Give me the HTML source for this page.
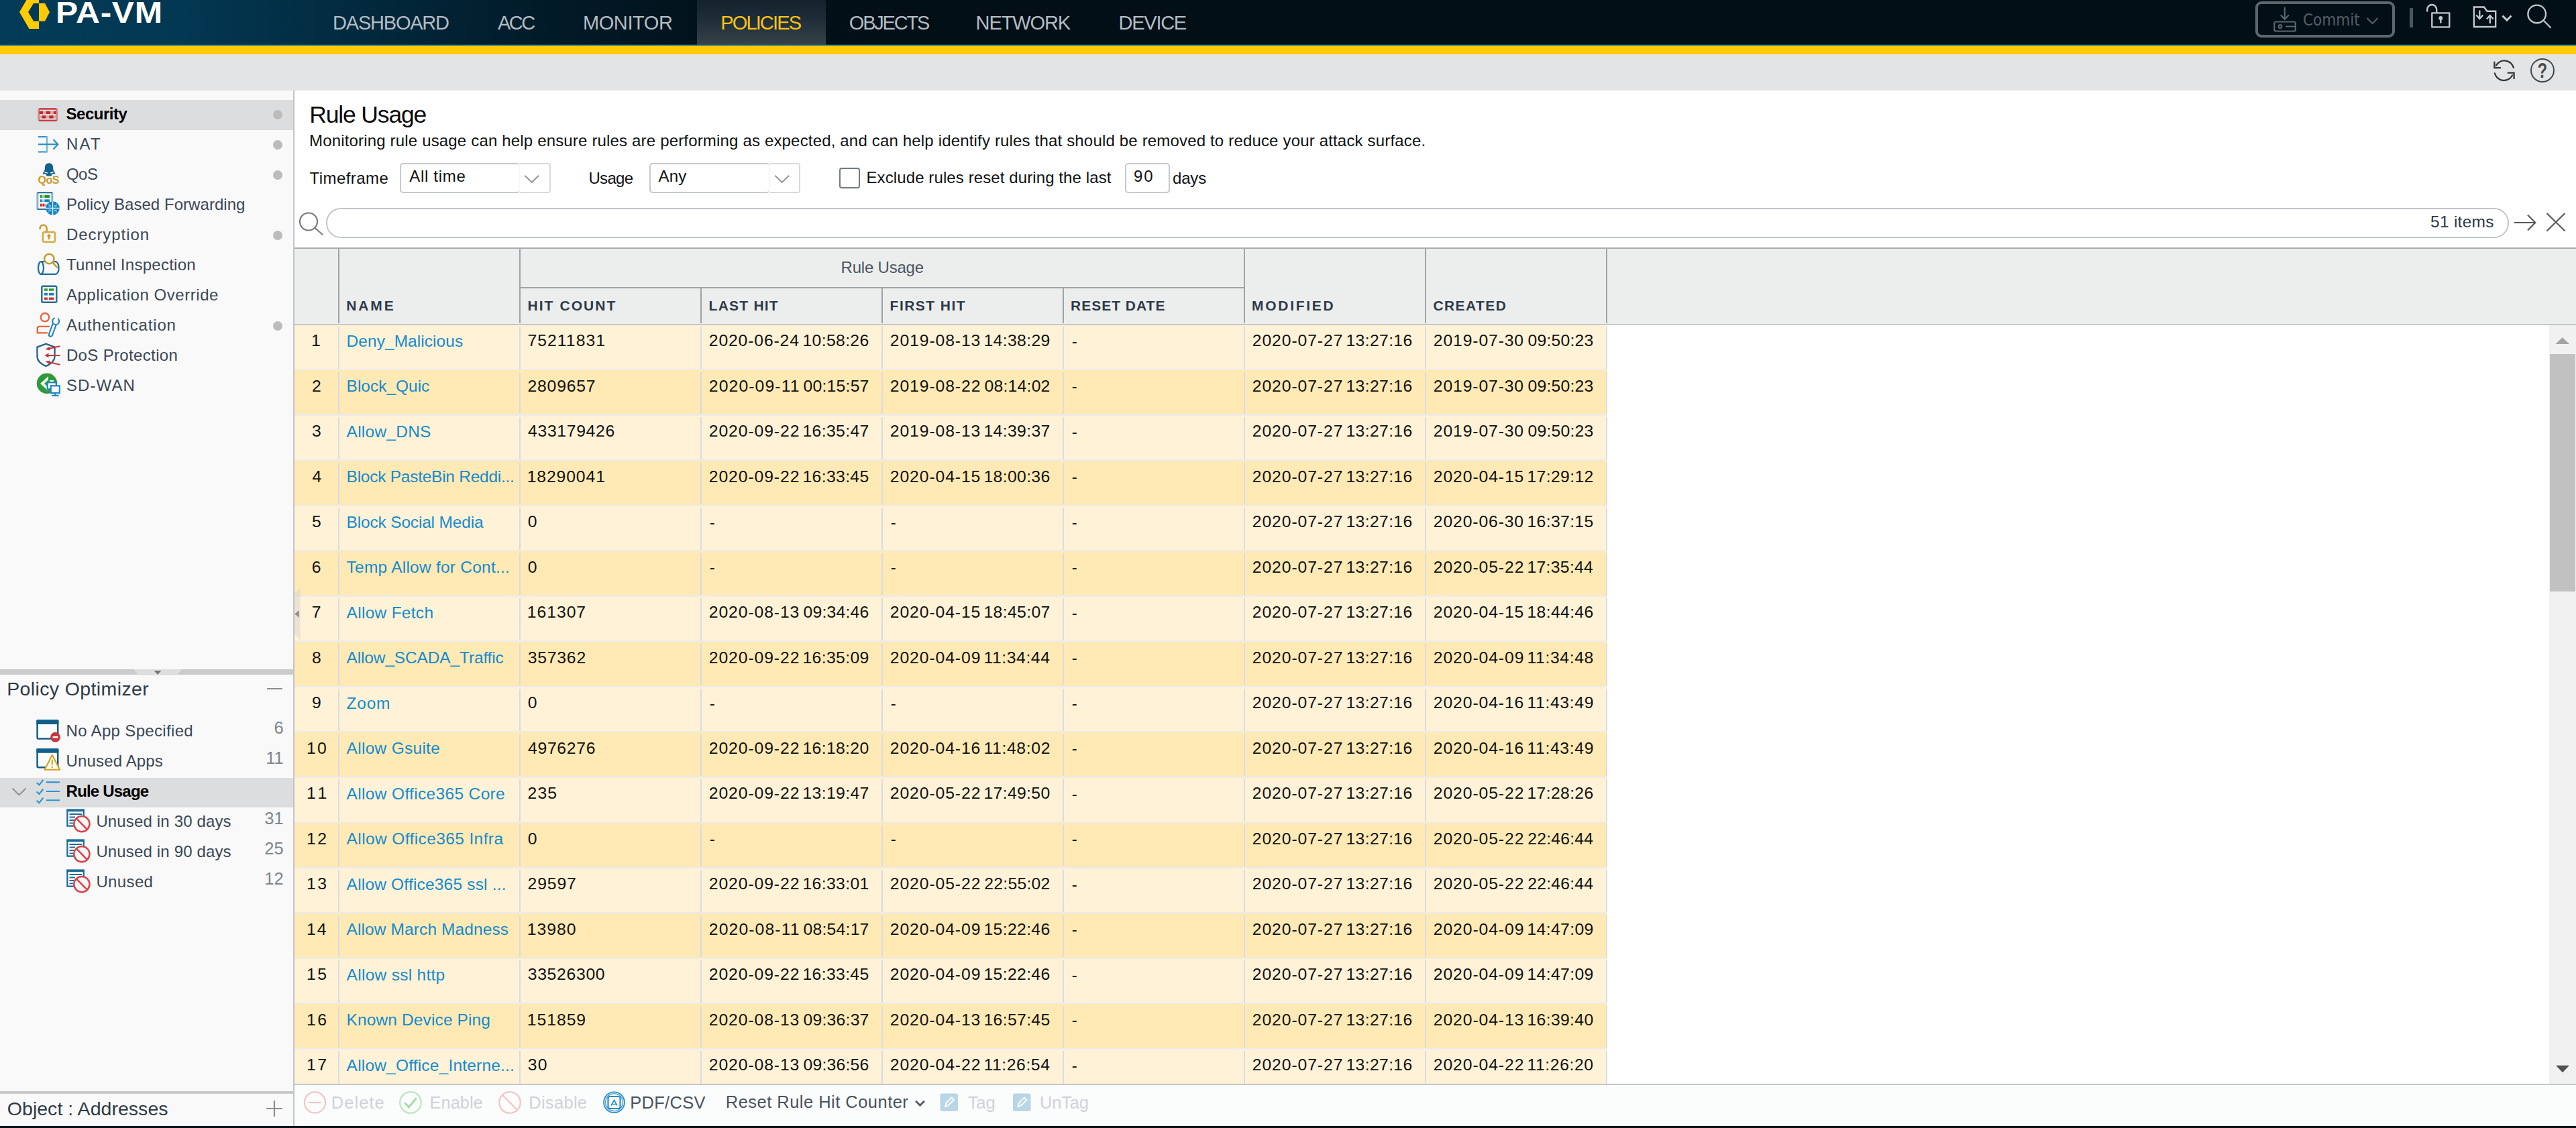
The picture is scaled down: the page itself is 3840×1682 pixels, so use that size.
<!DOCTYPE html>
<html lang="en"><head><meta charset="utf-8"><title>PA-VM</title>
<style>
html,body{margin:0;padding:0;}
body{width:3840px;height:1682px;position:relative;overflow:hidden;background:#fff;font-family:"Liberation Sans",sans-serif;}
.t{position:absolute;white-space:pre;}
.abs{position:absolute;}
svg{position:absolute;overflow:visible;}
#hdr{position:absolute;left:0;top:0;width:3840px;height:68px;background:linear-gradient(to right,#033b58 0,#033853 260px,#022a3f 520px,#021b29 800px,#02121b 1050px,#020f17 1300px,#020f17 100%);}
#ybar{position:absolute;left:0;top:68px;width:3840px;height:13px;background:#ffcb06;}
#gbar{position:absolute;left:0;top:81px;width:3840px;height:54px;background:#e3e4e6;}
#side{position:absolute;left:0;top:135px;width:437px;height:1544px;background:#f9f9f9;}
#sideb{position:absolute;left:437px;top:135px;width:2px;height:1544px;background:#c1c4c7;}
#bot{position:absolute;left:0;top:1678.5px;width:3840px;height:4px;background:#05131b;}
.sel{position:absolute;left:0;width:437px;height:45px;background:#dcdddf;}
.dot{position:absolute;left:407px;width:14px;height:14px;border-radius:50%;background:#bcbcbc;}
.hline{position:absolute;}
</style></head><body>

<div id="hdr">
<svg width="80" height="67" style="left:0;top:0" viewBox="0 0 80 67"><path d="M58,-7 L43.5,-7 L29,18 L43.5,43 L58,43 L58,31.5 L50,31.5 L42,18 L50,5 L58,5 Z" fill="#ffcb06"/><path d="M58,5 L67,5 L74,18 L67,31.5 L58,31.5 Z" fill="#ffcb06"/></svg>
<span class="t" style="left:83.2px;top:-7.3px;font-weight:bold;font-size:44.5px;line-height:52px;color:#fff;letter-spacing:0.6px;transform:scaleX(1.116);transform-origin:0 0;">PA-VM</span>
<div class="abs" style="left:1039px;top:0;width:192px;height:67px;background:linear-gradient(to bottom,#13222c 0,#1d2c36 40%,#37424a 100%);"></div>
<span class="t" style="left:496.1px;top:15.8px;font-size:29px;line-height:37px;color:#b3bcc3;letter-spacing:-1.22px;">DASHBOARD</span>
<span class="t" style="left:742.0px;top:15.8px;font-size:29px;line-height:37px;color:#b3bcc3;letter-spacing:-2.56px;">ACC</span>
<span class="t" style="left:868.9px;top:15.8px;font-size:29px;line-height:37px;color:#b3bcc3;letter-spacing:-0.39px;">MONITOR</span>
<span class="t" style="left:1074.2px;top:15.8px;font-size:29px;line-height:37px;color:#f9c414;letter-spacing:-1.85px;">POLICIES</span>
<span class="t" style="left:1265.8px;top:15.8px;font-size:29px;line-height:37px;color:#b3bcc3;letter-spacing:-2.21px;">OBJECTS</span>
<span class="t" style="left:1454.6px;top:15.8px;font-size:29px;line-height:37px;color:#b3bcc3;letter-spacing:-1.10px;">NETWORK</span>
<span class="t" style="left:1667.6px;top:15.8px;font-size:29px;line-height:37px;color:#b3bcc3;letter-spacing:-1.27px;">DEVICE</span>
<div class="abs" style="left:3362px;top:2px;width:200px;height:45.5px;border:4.5px solid #5b666d;border-radius:9px;"></div>
<svg width="40" height="40" style="left:3386px;top:8px" viewBox="3386 8 40 40" fill="none" stroke="#5a666e" stroke-width="2.2" stroke-linecap="round" stroke-linejoin="round"><path d="M3405.8,11.5 V28.5 M3400.3,23 L3405.8,28.8 L3411.3,23"/><rect x="3390.3" y="32.5" width="31.5" height="14" rx="2.5"/><circle cx="3399" cy="39.5" r="2.3"/><path d="M3408,39.5 H3421"/></svg>
<span class="t" style="left:3433px;top:13px;font-family:'DejaVu Sans Condensed','DejaVu Sans',sans-serif;font-stretch:condensed;font-size:24px;line-height:34px;color:#525e66;">Commit</span>
<svg width="20" height="12" style="left:3527px;top:25px" viewBox="0 0 20 12" fill="none" stroke="#525e66" stroke-width="2.2" stroke-linecap="round" stroke-linejoin="round"><path d="M2,2.5 L9.5,10 L17,2.5"/></svg>
<div class="abs" style="left:3592px;top:12px;width:5px;height:29px;background:#4a565e;"></div>
<svg width="44" height="44" style="left:3612px;top:0" viewBox="3612 0 44 44" fill="none" stroke="#c3c8cb" stroke-width="2.35" stroke-linejoin="round"><rect x="3625.3" y="19.3" width="26" height="21"/><path d="M3618.2,17.5 V14 A7,7 0 0 1 3632.2,14 V19"/><circle cx="3638.3" cy="27" r="3" fill="#c3c8cb" stroke="none"/><path d="M3638.3,27 V34.5" stroke-width="2.4"/></svg>
<svg width="44" height="44" style="left:3680px;top:0" viewBox="3680 0 44 44" fill="none" stroke="#c3c8cb" stroke-width="2.35" stroke-linejoin="miter"><path d="M3687.9,10.5 H3703 L3707.5,16.8 H3720.2 V40 H3687.9 Z"/><path d="M3696.3,15.5 V27.5 M3691.3,22.5 L3696.3,28 L3701.3,22.5"/><path d="M3711.8,35 V23.5 M3706.8,28.5 L3711.8,23 L3716.8,28.5"/></svg>
<svg width="20" height="14" style="left:3728px;top:20px" viewBox="3728 20 20 14" fill="none" stroke="#c3c8cb" stroke-width="3.1"><path d="M3730.5,23.5 L3737,30 L3743.5,23.5"/></svg>
<svg width="44" height="44" style="left:3764px;top:0" viewBox="3764 0 44 44" fill="none" stroke="#c3c8cb" stroke-width="2.35" stroke-linecap="round"><circle cx="3781.7" cy="20.9" r="13.3"/><path d="M3791.5,30.5 L3802,41"/></svg>
<div class="abs" style="left:0;top:66px;width:3840px;height:2px;background:linear-gradient(to bottom,rgba(11,106,148,.45) 0,rgba(11,106,148,.45) 50%,#0d6c96 50%,#0d6c96 100%);"></div>
</div><div id="ybar"></div><div id="gbar">
<svg width="40" height="40" style="left:3713px;top:4px" viewBox="3713 85 40 40" fill="none" stroke="#363636" stroke-width="2.3" stroke-linejoin="miter"><path d="M3720.6,98.2 A14.2,14.2 0 0 1 3747.2,101.9"/><path d="M3718.4,91.7 V101.2 H3727.9"/><path d="M3745.6,111.4 A14.2,14.2 0 0 1 3718.6,108.4"/><path d="M3737.8,108.6 H3747.6 V118"/></svg>
<svg width="40" height="40" style="left:3770px;top:4px" viewBox="3770 85 40 40"><circle cx="3790" cy="104.9" r="17" fill="none" stroke="#42474b" stroke-width="2"/><text x="3790" y="116" text-anchor="middle" font-family="Liberation Sans,sans-serif" font-weight="bold" font-size="31" fill="#454a4e" transform="translate(3790 0) scale(0.76 1) translate(-3790 0)">?</text></svg>
</div>
<div id="side"></div><div id="sideb"></div>
<div class="sel" style="top:149px"></div>
<div class="sel" style="top:1159.5px;height:44.5px"></div>
<span class="t" style="left:98.6px;top:153.8px;font-size:24px;line-height:31px;color:#000;font-weight:bold;letter-spacing:-0.49px;">Security</span>
<div class="dot" style="top:164px"></div>
<span class="t" style="left:98.9px;top:198.8px;font-size:24px;line-height:31px;color:#3b4754;letter-spacing:2.24px;">NAT</span>
<div class="dot" style="top:209px"></div>
<span class="t" style="left:98.9px;top:243.8px;font-size:24px;line-height:31px;color:#3b4754;letter-spacing:-0.45px;">QoS</span>
<div class="dot" style="top:254px"></div>
<span class="t" style="left:98.9px;top:288.8px;font-size:24px;line-height:31px;color:#3b4754;letter-spacing:0.05px;">Policy Based Forwarding</span>
<span class="t" style="left:98.9px;top:333.8px;font-size:24px;line-height:31px;color:#3b4754;letter-spacing:0.95px;">Decryption</span>
<div class="dot" style="top:344px"></div>
<span class="t" style="left:98.9px;top:378.8px;font-size:24px;line-height:31px;color:#3b4754;letter-spacing:0.26px;">Tunnel Inspection</span>
<span class="t" style="left:98.9px;top:423.8px;font-size:24px;line-height:31px;color:#3b4754;letter-spacing:0.55px;">Application Override</span>
<span class="t" style="left:98.9px;top:468.8px;font-size:24px;line-height:31px;color:#3b4754;letter-spacing:0.84px;">Authentication</span>
<div class="dot" style="top:479px"></div>
<span class="t" style="left:98.9px;top:513.8px;font-size:24px;line-height:31px;color:#3b4754;letter-spacing:0.35px;">DoS Protection</span>
<span class="t" style="left:98.9px;top:558.8px;font-size:24px;line-height:31px;color:#3b4754;letter-spacing:1.12px;">SD-WAN</span>
<svg width="437" height="1544" style="left:0;top:135px" viewBox="0 135 437 1544" fill="none">
<g><rect x="56.3" y="161.2" width="30" height="19.8" rx="2.8" fill="#d18b8e"/><rect x="58.2" y="161.2" width="26.2" height="2.5" rx="1" fill="#c4393e"/><rect x="58.2" y="178.5" width="26.2" height="2.5" rx="1" fill="#c4393e"/><rect x="59.6" y="163.7" width="23.4" height="14.8" fill="#e6dfe1"/><rect x="59.6" y="165.7" width="23.4" height="4.5" fill="#dcaaac"/><rect x="59.6" y="172.2" width="23.4" height="4.3" fill="#dcaaac"/><rect x="58.4" y="165.8" width="5.8" height="4.3" rx="1" fill="#c0292f"/><rect x="68.7" y="165.8" width="6.3" height="4.3" rx="1" fill="#c0292f"/><rect x="79.8" y="165.8" width="4" height="4.3" rx="1" fill="#c0292f"/><rect x="62.5" y="172.3" width="5.9" height="4.1" rx="1" fill="#c0292f"/><rect x="73.3" y="172.3" width="6.2" height="4.1" rx="1" fill="#c0292f"/></g>
<g stroke="#2a8fc6" stroke-width="2.2"><path d="M57,204 H70 M57,226.5 H70"/><path d="M70,203 V227.5" stroke="#7db9dc" stroke-width="2.6"/><path d="M57,215.2 H86"/><path d="M79.5,208 L86.3,215.2 L79.5,222.4" stroke-width="2.2"/></g>
<g><path d="M73,243.2 C68.6,243.2 67,246.6 67,249.6 L67,252.6 L63.3,259.6 L68.2,259.6 L69.6,262.6 L76.4,262.6 L77.8,259.6 L82.7,259.6 L79.2,252.6 L79.2,249.6 C79.2,246.6 77.4,243.2 73,243.2 Z" fill="#12618e"/><path d="M66.6,255.8 L71.4,257.6 L70.6,258.8 L66.4,257.6 Z M79.4,255.8 L74.6,257.6 L75.4,258.8 L79.6,257.6 Z" fill="#e9f0f4"/><text x="72.2" y="274" text-anchor="middle" font-family="Liberation Sans,sans-serif" font-weight="bold" font-size="16" fill="#c99a2c" letter-spacing="-0.5">QoS</text></g>
<g><rect x="54.4" y="286.4" width="24.9" height="26.4" rx="2" fill="#8ab3cb"/><rect x="57.4" y="288" width="18.9" height="23.2" fill="#fdfdfd"/><rect x="55.4" y="286.4" width="22.9" height="1.8" rx=".8" fill="#0f5e8a"/><rect x="55.4" y="311" width="22.9" height="1.8" rx=".8" fill="#0f5e8a"/><rect x="60" y="290.8" width="14" height="4.2" fill="#9fd3a5"/><rect x="60" y="290.8" width="2.5" height="4.2" fill="#23952f"/><rect x="66.6" y="290.8" width="7.4" height="4.2" fill="#23952f"/><rect x="60" y="297.4" width="14" height="3.8" fill="#a9d2ea"/><rect x="60" y="297.4" width="2.5" height="3.8" fill="#1580c0"/><rect x="66.6" y="297.4" width="7.4" height="3.8" fill="#1580c0"/><rect x="60" y="303.8" width="8.6" height="4.1" fill="#e08f93"/><rect x="60" y="303.8" width="2.5" height="4.1" fill="#c22b31"/><rect x="64" y="303.8" width="2" height="4.1" fill="#c22b31"/><circle cx="78.5" cy="310.5" r="10.3" fill="#1384c2"/><path d="M78.5,300.2 V320.8 M68.2,310.5 H88.8" stroke="#d6ebf6" stroke-width="1.5"/><path d="M72.5,307 H76 M81,307 H84.5 M72.5,314 H76 M81,314 H84.5" stroke="#8cc6e6" stroke-width="2.2"/><path d="M72,303.5 Q75.5,310.5 72,317.5 M85,303.5 Q81.5,310.5 85,317.5" stroke="#5fb0dc" stroke-width="1.1" fill="none"/></g>
<g stroke="#c99a2e" stroke-width="2.6"><rect x="63.9" y="346.1" width="18" height="14.6" rx="2.2" stroke="#d4ac4b"/><path d="M59.6,342 V340.5 A5,5 0 0 1 69.6,340.5 V345.5" /><path d="M73,348.6 L76.4,352.6 H74.4 V357 H71.6 V352.6 H69.6 Z" fill="#c99a2e" stroke="none"/></g>
<g stroke="#1f6f9a" stroke-width="2.3"><ellipse cx="61" cy="399.5" rx="4" ry="9.3"/><path d="M61,390.2 H83.5 Q87.5,392 87.5,399.5 Q87.5,407 83.5,408.8 H61"/></g><g stroke="#c99a2e" stroke-width="2.5"><circle cx="73.3" cy="386" r="7.2" fill="#f9f9f9"/><path d="M78.6,391.4 L85.3,399.3"/></g>
<g><rect x="62.3" y="426.8" width="22" height="24" rx="1.5" stroke="#2a6f97" stroke-width="2.5" fill="#fff"/><path d="M66,432 H71 M73,432 H80.5" stroke="#2f9a3c" stroke-width="3.6"/><path d="M66,438.6 H71 M73,438.6 H80.5" stroke="#1d84c0" stroke-width="3.6"/><path d="M66,445.2 H71 M73,445.2 H80.5" stroke="#c8363d" stroke-width="3.6"/></g>
<g stroke="#e8623a" stroke-width="2.3"><circle cx="67" cy="473.2" r="6.2"/><path d="M74,486.8 H59 Q55.8,486.8 55.8,490 V496.4 H71"/></g><g><path d="M82.5,480 L75.5,499" stroke="#1f86c2" stroke-width="7.4" stroke-linecap="round"/><path d="M82.5,480 L75.5,499" stroke="#f9f9f9" stroke-width="3.2" stroke-linecap="round"/><circle cx="83.2" cy="479" r="5" stroke="#1f86c2" stroke-width="2.2" fill="#f9f9f9"/><path d="M83.5,472.5 L84.5,478.5" stroke="#f9f9f9" stroke-width="4"/></g>
<g><path d="M55.4,517.6 L68.5,512.6 L81.6,517.6 V531 C81.6,538.5 75.5,543 68.5,546 C61.5,543 55.4,538.5 55.4,531 Z" stroke="#1f5f86" stroke-width="2.2"/><g stroke="#c8363d" stroke-width="2"><path d="M89.6,516.2 L71,520.3 M89.6,530 H70 M89.6,543.8 L71,539.7"/></g><path d="M67.6,521 L73.6,516.8 L74.6,522.6 Z M66.5,530 L72.5,526.6 V533.4 Z M67.6,539 L74.6,537.4 L73.6,543.2 Z" fill="#c8363d"/></g>
<g><circle cx="70" cy="571.8" r="15.3" fill="#2f9a3c"/><path d="M60,572 L72,561 V567 H80 V577 H72 V583 Z" fill="#eaf6eb"/><path d="M66,572 L74,564.5 V579.5 Z" fill="#2f9a3c"/><rect x="70.8" y="570.3" width="13" height="10" stroke="#1f86c2" stroke-width="2.2" fill="#fff"/><rect x="75.8" y="575.3" width="13" height="10.6" stroke="#1f86c2" stroke-width="2.2" fill="#fff"/><path d="M82.3,586 V589.6 M77.3,589.8 H87.6" stroke="#1f86c2" stroke-width="2.2"/></g>
<g><rect x="55.6" y="1074.5" width="30.6" height="27" rx="1.5" stroke="#105e8a" stroke-width="2.5" fill="#fbfbfb"/><rect x="54.4" y="1073.3" width="33" height="6.8" rx="1" fill="#105e8a"/><circle cx="82.5" cy="1099.2" r="7.4" fill="#c8363d"/><path d="M78.6,1099.2 H86.4" stroke="#fff" stroke-width="2.4"/></g>
<g><rect x="55.6" y="1117.2" width="30.6" height="27" rx="1.5" stroke="#105e8a" stroke-width="2.5" fill="#fbfbfb"/><rect x="54.4" y="1116.0" width="33" height="6.8" rx="1" fill="#105e8a"/><path d="M77.8,1125.8 L66.6,1147.8 H89.2 Z" fill="#fdfaee" stroke="#d1a21c" stroke-width="2" stroke-linejoin="round"/><path d="M77.8,1132.5 V1140.5" stroke="#d1a21c" stroke-width="2"/><circle cx="77.8" cy="1143.8" r="1.2" fill="#d1a21c"/></g>
<g stroke="#2b95cf" stroke-width="2.1"><path d="M54.6,1166.9 L58.4,1170.4 L64.4,1162.9 M69,1166.4 H89"/><path d="M54.6,1180.5 L58.4,1184.0 L64.4,1176.5 M69,1180.0 H89"/><path d="M54.6,1193.7 L58.4,1197.2 L64.4,1189.7 M69,1193.2 H89"/></g>
<g transform="translate(0,0)"><rect x="100.4" y="1207.8" width="24.4" height="23.8" stroke="#1d6c97" stroke-width="2.3" fill="#fff"/><rect x="99.3" y="1206.6" width="26.6" height="3.6" fill="#1d6c97"/><path d="M103.5,1214 H122 M103.5,1218.5 H112 M103.5,1223 H110 M103.5,1227.3 H109" stroke="#1d6c97" stroke-width="1.8"/><circle cx="121.9" cy="1228.6" r="11.6" fill="#fdf6f6" stroke="#d8434b" stroke-width="2.5"/><path d="M113.8,1220.4 L130,1236.8" stroke="#d8434b" stroke-width="2.5"/></g>
<g transform="translate(0,45)"><rect x="100.4" y="1207.8" width="24.4" height="23.8" stroke="#1d6c97" stroke-width="2.3" fill="#fff"/><rect x="99.3" y="1206.6" width="26.6" height="3.6" fill="#1d6c97"/><path d="M103.5,1214 H122 M103.5,1218.5 H112 M103.5,1223 H110 M103.5,1227.3 H109" stroke="#1d6c97" stroke-width="1.8"/><circle cx="121.9" cy="1228.6" r="11.6" fill="#fdf6f6" stroke="#d8434b" stroke-width="2.5"/><path d="M113.8,1220.4 L130,1236.8" stroke="#d8434b" stroke-width="2.5"/></g>
<g transform="translate(0,90)"><rect x="100.4" y="1207.8" width="24.4" height="23.8" stroke="#1d6c97" stroke-width="2.3" fill="#fff"/><rect x="99.3" y="1206.6" width="26.6" height="3.6" fill="#1d6c97"/><path d="M103.5,1214 H122 M103.5,1218.5 H112 M103.5,1223 H110 M103.5,1227.3 H109" stroke="#1d6c97" stroke-width="1.8"/><circle cx="121.9" cy="1228.6" r="11.6" fill="#fdf6f6" stroke="#d8434b" stroke-width="2.5"/><path d="M113.8,1220.4 L130,1236.8" stroke="#d8434b" stroke-width="2.5"/></g>
</svg>
<div class="abs" style="left:0;top:998px;width:437px;height:8px;background:#c9cbcd;"></div>
<svg width="80" height="12" style="left:195px;top:997px" viewBox="0 0 80 12"><path d="M4,1 H76 L68,10 H12 Z" fill="#dcdee0"/><path d="M34.5,3 H45.5 L40,9 Z" fill="#777"/></svg>
<span class="t" style="left:10.2px;top:1008.5px;font-size:28.5px;line-height:37px;color:#2f3a46;letter-spacing:0.38px;">Policy Optimizer</span>
<div class="abs" style="left:398px;top:1025.5px;width:23px;height:2px;background:#8a8f94;"></div>
<span class="t" style="left:98.6px;top:1073.8px;font-size:24px;line-height:31px;color:#3b4754;letter-spacing:0.33px;">No App Specified</span>
<span class="t" style="right:3417.4px;top:1068.8px;font-size:25.5px;line-height:33px;color:#7f868c;">6</span>
<span class="t" style="left:98.6px;top:1118.8px;font-size:24px;line-height:31px;color:#3b4754;letter-spacing:0.14px;">Unused Apps</span>
<span class="t" style="right:3417.4px;top:1113.8px;font-size:25.5px;line-height:33px;color:#7f868c;">11</span>
<span class="t" style="left:98.6px;top:1163.8px;font-size:24px;line-height:31px;color:#000;font-weight:bold;letter-spacing:-0.80px;">Rule Usage</span>
<span class="t" style="left:143.4px;top:1208.8px;font-size:24px;line-height:31px;color:#3b4754;letter-spacing:0.15px;">Unused in 30 days</span>
<span class="t" style="right:3417.4px;top:1203.8px;font-size:25.5px;line-height:33px;color:#7f868c;">31</span>
<span class="t" style="left:143.4px;top:1253.8px;font-size:24px;line-height:31px;color:#3b4754;letter-spacing:0.15px;">Unused in 90 days</span>
<span class="t" style="right:3417.4px;top:1248.8px;font-size:25.5px;line-height:33px;color:#7f868c;">25</span>
<span class="t" style="left:143.4px;top:1298.8px;font-size:24px;line-height:31px;color:#3b4754;letter-spacing:0.37px;">Unused</span>
<span class="t" style="right:3417.4px;top:1293.8px;font-size:25.5px;line-height:33px;color:#7f868c;">12</span>
<svg width="26" height="16" style="left:16px;top:1173px" viewBox="0 0 26 16" fill="none" stroke="#8a8d90" stroke-width="1.8"><path d="M2.5,2.5 L12.5,12.5 L22.5,2.5"/></svg>
<div class="abs" style="left:0;top:1627px;width:437px;height:4px;background:#c9c9c9;"></div>
<span class="t" style="left:10.8px;top:1634.5px;font-size:28.5px;line-height:37px;color:#2f3a46;letter-spacing:0.03px;">Object : Addresses</span>
<svg width="28" height="28" style="left:395px;top:1639px" viewBox="0 0 28 28" stroke="#8a8f94" stroke-width="2.2"><path d="M2,14 H26 M14,2 V26"/></svg>
<span class="t" style="left:461.3px;top:148.0px;font-size:35.5px;line-height:46px;color:#0b0b0b;letter-spacing:-1.16px;">Rule Usage</span>
<span class="t" style="left:461.0px;top:193.8px;font-size:24px;line-height:31px;color:#111;letter-spacing:0.17px;">Monitoring rule usage can help ensure rules are performing as expected, and can help identify rules that should be removed to reduce your attack surface.</span>
<span class="t" style="left:461.5px;top:250.3px;font-size:24px;line-height:31px;color:#111;letter-spacing:0.45px;">Timeframe</span>
<div class="abs" style="left:596.0px;top:243.2px;width:175.5px;height:40.6px;border:2px solid #c4c9cd;border-right-color:rgba(214,218,221,0.25);border-radius:5px;background:#fff;"></div>
<div class="abs" style="left:775.2px;top:243.2px;width:43.6px;height:40.6px;border:2px solid #d6dadd;border-left:none;border-radius:0 4px 4px 0;background:#fff;"></div>
<span class="t" style="left:610.3px;top:246.5px;font-size:24px;line-height:31px;color:#111;letter-spacing:0.68px;">All time</span>
<svg width="26" height="16" style="left:780.2px;top:258.5px" viewBox="0 0 26 16" fill="none" stroke="#92979c" stroke-width="2"><path d="M2.2,2.8 L12.7,12.8 L23.2,2.8"/></svg>
<span class="t" style="left:877.5px;top:250.3px;font-size:24px;line-height:31px;color:#111;letter-spacing:-0.71px;">Usage</span>
<div class="abs" style="left:968.4px;top:243.2px;width:175.5px;height:40.6px;border:2px solid #c4c9cd;border-right-color:rgba(214,218,221,0.25);border-radius:5px;background:#fff;"></div>
<div class="abs" style="left:1147.6px;top:243.2px;width:43.6px;height:40.6px;border:2px solid #d6dadd;border-left:none;border-radius:0 4px 4px 0;background:#fff;"></div>
<span class="t" style="left:981.4px;top:246.5px;font-size:24px;line-height:31px;color:#111;letter-spacing:0.31px;">Any</span>
<svg width="26" height="16" style="left:1152.6px;top:258.5px" viewBox="0 0 26 16" fill="none" stroke="#92979c" stroke-width="2"><path d="M2.2,2.8 L12.7,12.8 L23.2,2.8"/></svg>
<div class="abs" style="left:1251.2px;top:250px;width:27px;height:26.6px;border:2.1px solid #737a81;border-radius:4px;background:#fff;"></div>
<span class="t" style="left:1291.5px;top:249.0px;font-size:24px;line-height:31px;color:#111;letter-spacing:0.10px;">Exclude rules reset during the last</span>
<div class="abs" style="left:1676.6px;top:243.2px;width:63px;height:40.6px;border:2px solid #c4c9cd;border-radius:5px;background:#fff;"></div>
<span class="t" style="left:1689.9px;top:246.7px;font-size:24px;line-height:31px;color:#111;letter-spacing:2.05px;">90</span>
<span class="t" style="left:1748.0px;top:250.0px;font-size:24px;line-height:31px;color:#111;letter-spacing:-0.17px;">days</span>
<svg width="40" height="40" style="left:444px;top:314px" viewBox="444 314 40 40" fill="none" stroke="#777b7f" stroke-width="2.2" stroke-linecap="round"><circle cx="460" cy="330.5" r="13"/><path d="M469.6,340 L480.5,349.5"/></svg>
<div class="abs" style="left:486.4px;top:310.2px;width:3250px;height:40.6px;border:2px solid #c1c5c9;border-radius:22px;background:#fff;"></div>
<span class="t" style="left:3623.1px;top:315.0px;font-size:24.5px;line-height:31px;color:#2f3946;letter-spacing:0.25px;">51 items</span>
<svg width="36" height="30" style="left:3746px;top:317px" viewBox="3746 317 36 30" fill="none" stroke="#55595d" stroke-width="2.2"><path d="M3748,332 H3779 M3768,320.5 L3779.3,332 L3768,343.5"/></svg>
<svg width="32" height="32" style="left:3794px;top:315px" viewBox="3794 315 32 32" fill="none" stroke="#55595d" stroke-width="2.2"><path d="M3796.5,318 L3823.5,344.5 M3823.5,318 L3796.5,344.5"/></svg>
<div class="abs" style="left:439px;top:369px;width:3401px;height:2px;background:#a7abaf;"></div>
<div class="abs" style="left:439px;top:371px;width:3401px;height:112px;background:#eceeee;"></div>
<div class="abs" style="left:439px;top:483px;width:3401px;height:2px;background:#c4c8cb;"></div>
<div class="abs" style="left:504.0px;top:371px;width:2px;height:110.5px;background:#9ea3a7;"></div>
<div class="abs" style="left:774.0px;top:371px;width:2px;height:110.5px;background:#9ea3a7;"></div>
<div class="abs" style="left:1044.0px;top:430px;width:2px;height:51.5px;background:#9ea3a7;"></div>
<div class="abs" style="left:1314.0px;top:430px;width:2px;height:51.5px;background:#9ea3a7;"></div>
<div class="abs" style="left:1584.0px;top:430px;width:2px;height:51.5px;background:#9ea3a7;"></div>
<div class="abs" style="left:1854.0px;top:371px;width:2px;height:110.5px;background:#9ea3a7;"></div>
<div class="abs" style="left:2124.0px;top:371px;width:2px;height:110.5px;background:#9ea3a7;"></div>
<div class="abs" style="left:2394.0px;top:371px;width:2px;height:110.5px;background:#9ea3a7;"></div>
<div class="abs" style="left:776px;top:428px;width:1078px;height:2px;background:#9ea3a7;"></div>
<span class="t" style="left:1253.6px;top:382.6px;font-size:24px;line-height:31px;color:#4b5661;letter-spacing:-0.22px;">Rule Usage</span>
<span class="t" style="left:516.2px;top:442.2px;font-size:21px;line-height:27px;color:#2f3a47;font-weight:bold;letter-spacing:2.92px;">NAME</span>
<span class="t" style="left:786.4px;top:442.2px;font-size:21px;line-height:27px;color:#2f3a47;font-weight:bold;letter-spacing:2.09px;">HIT COUNT</span>
<span class="t" style="left:1056.6px;top:442.2px;font-size:21px;line-height:27px;color:#2f3a47;font-weight:bold;letter-spacing:1.23px;">LAST HIT</span>
<span class="t" style="left:1326.6px;top:442.2px;font-size:21px;line-height:27px;color:#2f3a47;font-weight:bold;letter-spacing:1.46px;">FIRST HIT</span>
<span class="t" style="left:1596.0px;top:442.2px;font-size:21px;line-height:27px;color:#2f3a47;font-weight:bold;letter-spacing:1.00px;">RESET DATE</span>
<span class="t" style="left:1866.1px;top:442.2px;font-size:21px;line-height:27px;color:#2f3a47;font-weight:bold;letter-spacing:2.71px;">MODIFIED</span>
<span class="t" style="left:2136.4px;top:442.2px;font-size:21px;line-height:27px;color:#2f3a47;font-weight:bold;letter-spacing:1.44px;">CREATED</span>
<div class="abs" style="left:439px;top:484.5px;width:3401px;height:1131.5px;overflow:hidden;">
<div class="abs" style="left:0;top:0.0px;width:1957px;height:67.5px;background:#fff2d6;"></div>
<div class="abs" style="left:0;top:65.5px;width:1957px;height:2px;background:#ebebf0;"></div>
<div class="abs" style="left:65.1px;top:2.8px;width:1.8px;height:62.5px;background:#d9dce3;"></div>
<div class="abs" style="left:335.1px;top:2.8px;width:1.8px;height:62.5px;background:#d9dce3;"></div>
<div class="abs" style="left:605.1px;top:2.8px;width:1.8px;height:62.5px;background:#d9dce3;"></div>
<div class="abs" style="left:875.1px;top:2.8px;width:1.8px;height:62.5px;background:#d9dce3;"></div>
<div class="abs" style="left:1145.1px;top:2.8px;width:1.8px;height:62.5px;background:#d9dce3;"></div>
<div class="abs" style="left:1415.1px;top:2.8px;width:1.8px;height:62.5px;background:#d9dce3;"></div>
<div class="abs" style="left:1685.1px;top:2.8px;width:1.8px;height:62.5px;background:#d9dce3;"></div>
<div class="abs" style="left:1955.1px;top:2.8px;width:1.8px;height:62.5px;background:#d9dce3;"></div>
<span class="t" style="left:25.1px;top:7.8px;font-size:24.75px;line-height:32px;color:#111;">1</span>
<span class="t" style="left:77.6px;top:8.3px;font-size:24.5px;line-height:31px;color:#148bd0;letter-spacing:0.05px;">Deny_Malicious</span>
<span class="t" style="left:347.4px;top:7.8px;font-size:24.75px;line-height:32px;color:#111;letter-spacing:1.05px;">75211831</span>
<span class="t" style="left:617.8px;top:7.8px;font-size:24.75px;line-height:32px;color:#111;letter-spacing:0.84px;">2020-06-24</span>
<span class="t" style="left:757.5px;top:7.8px;font-size:24.75px;line-height:32px;color:#111;letter-spacing:0.34px;">10:58:26</span>
<span class="t" style="left:887.8px;top:7.8px;font-size:24.75px;line-height:32px;color:#111;letter-spacing:0.88px;">2019-08-13</span>
<span class="t" style="left:1027.5px;top:7.8px;font-size:24.75px;line-height:32px;color:#111;letter-spacing:0.36px;">14:38:29</span>
<span class="t" style="left:1158.8px;top:8.3px;font-size:24px;line-height:31px;color:#111;">-</span>
<span class="t" style="left:1427.8px;top:7.8px;font-size:24.75px;line-height:32px;color:#111;letter-spacing:0.89px;">2020-07-27</span>
<span class="t" style="left:1567.5px;top:7.8px;font-size:24.75px;line-height:32px;color:#111;letter-spacing:0.34px;">13:27:16</span>
<span class="t" style="left:1697.8px;top:7.8px;font-size:24.75px;line-height:32px;color:#111;letter-spacing:0.86px;">2019-07-30</span>
<span class="t" style="left:1838.5px;top:7.8px;font-size:24.75px;line-height:32px;color:#111;letter-spacing:0.20px;">09:50:23</span>
<div class="abs" style="left:0;top:67.5px;width:1957px;height:67.5px;background:#ffe9b4;"></div>
<div class="abs" style="left:0;top:133.0px;width:1957px;height:2px;background:#ebebf0;"></div>
<div class="abs" style="left:65.1px;top:70.3px;width:1.8px;height:62.5px;background:#d9dce3;"></div>
<div class="abs" style="left:335.1px;top:70.3px;width:1.8px;height:62.5px;background:#d9dce3;"></div>
<div class="abs" style="left:605.1px;top:70.3px;width:1.8px;height:62.5px;background:#d9dce3;"></div>
<div class="abs" style="left:875.1px;top:70.3px;width:1.8px;height:62.5px;background:#d9dce3;"></div>
<div class="abs" style="left:1145.1px;top:70.3px;width:1.8px;height:62.5px;background:#d9dce3;"></div>
<div class="abs" style="left:1415.1px;top:70.3px;width:1.8px;height:62.5px;background:#d9dce3;"></div>
<div class="abs" style="left:1685.1px;top:70.3px;width:1.8px;height:62.5px;background:#d9dce3;"></div>
<div class="abs" style="left:1955.1px;top:70.3px;width:1.8px;height:62.5px;background:#d9dce3;"></div>
<span class="t" style="left:25.9px;top:75.3px;font-size:24.75px;line-height:32px;color:#111;">2</span>
<span class="t" style="left:77.6px;top:75.8px;font-size:24.5px;line-height:31px;color:#148bd0;letter-spacing:-0.02px;">Block_Quic</span>
<span class="t" style="left:347.5px;top:75.3px;font-size:24.75px;line-height:32px;color:#111;letter-spacing:0.79px;">2809657</span>
<span class="t" style="left:617.8px;top:75.3px;font-size:24.75px;line-height:32px;color:#111;letter-spacing:1.10px;">2020-09-11</span>
<span class="t" style="left:758.5px;top:75.3px;font-size:24.75px;line-height:32px;color:#111;letter-spacing:0.22px;">00:15:57</span>
<span class="t" style="left:887.8px;top:75.3px;font-size:24.75px;line-height:32px;color:#111;letter-spacing:0.89px;">2019-08-22</span>
<span class="t" style="left:1028.5px;top:75.3px;font-size:24.75px;line-height:32px;color:#111;letter-spacing:0.22px;">08:14:02</span>
<span class="t" style="left:1158.8px;top:75.8px;font-size:24px;line-height:31px;color:#111;">-</span>
<span class="t" style="left:1427.8px;top:75.3px;font-size:24.75px;line-height:32px;color:#111;letter-spacing:0.89px;">2020-07-27</span>
<span class="t" style="left:1567.5px;top:75.3px;font-size:24.75px;line-height:32px;color:#111;letter-spacing:0.34px;">13:27:16</span>
<span class="t" style="left:1697.8px;top:75.3px;font-size:24.75px;line-height:32px;color:#111;letter-spacing:0.86px;">2019-07-30</span>
<span class="t" style="left:1838.5px;top:75.3px;font-size:24.75px;line-height:32px;color:#111;letter-spacing:0.20px;">09:50:23</span>
<div class="abs" style="left:0;top:135.0px;width:1957px;height:67.5px;background:#fff2d6;"></div>
<div class="abs" style="left:0;top:200.5px;width:1957px;height:2px;background:#ebebf0;"></div>
<div class="abs" style="left:65.1px;top:137.8px;width:1.8px;height:62.5px;background:#d9dce3;"></div>
<div class="abs" style="left:335.1px;top:137.8px;width:1.8px;height:62.5px;background:#d9dce3;"></div>
<div class="abs" style="left:605.1px;top:137.8px;width:1.8px;height:62.5px;background:#d9dce3;"></div>
<div class="abs" style="left:875.1px;top:137.8px;width:1.8px;height:62.5px;background:#d9dce3;"></div>
<div class="abs" style="left:1145.1px;top:137.8px;width:1.8px;height:62.5px;background:#d9dce3;"></div>
<div class="abs" style="left:1415.1px;top:137.8px;width:1.8px;height:62.5px;background:#d9dce3;"></div>
<div class="abs" style="left:1685.1px;top:137.8px;width:1.8px;height:62.5px;background:#d9dce3;"></div>
<div class="abs" style="left:1955.1px;top:137.8px;width:1.8px;height:62.5px;background:#d9dce3;"></div>
<span class="t" style="left:26.1px;top:142.8px;font-size:24.75px;line-height:32px;color:#111;">3</span>
<span class="t" style="left:77.6px;top:143.3px;font-size:24.5px;line-height:31px;color:#148bd0;letter-spacing:0.24px;">Allow_DNS</span>
<span class="t" style="left:348.1px;top:142.8px;font-size:24.75px;line-height:32px;color:#111;letter-spacing:0.65px;">433179426</span>
<span class="t" style="left:617.8px;top:142.8px;font-size:24.75px;line-height:32px;color:#111;letter-spacing:0.89px;">2020-09-22</span>
<span class="t" style="left:757.5px;top:142.8px;font-size:24.75px;line-height:32px;color:#111;letter-spacing:0.36px;">16:35:47</span>
<span class="t" style="left:887.8px;top:142.8px;font-size:24.75px;line-height:32px;color:#111;letter-spacing:0.88px;">2019-08-13</span>
<span class="t" style="left:1027.5px;top:142.8px;font-size:24.75px;line-height:32px;color:#111;letter-spacing:0.36px;">14:39:37</span>
<span class="t" style="left:1158.8px;top:143.3px;font-size:24px;line-height:31px;color:#111;">-</span>
<span class="t" style="left:1427.8px;top:142.8px;font-size:24.75px;line-height:32px;color:#111;letter-spacing:0.89px;">2020-07-27</span>
<span class="t" style="left:1567.5px;top:142.8px;font-size:24.75px;line-height:32px;color:#111;letter-spacing:0.34px;">13:27:16</span>
<span class="t" style="left:1697.8px;top:142.8px;font-size:24.75px;line-height:32px;color:#111;letter-spacing:0.86px;">2019-07-30</span>
<span class="t" style="left:1838.5px;top:142.8px;font-size:24.75px;line-height:32px;color:#111;letter-spacing:0.20px;">09:50:23</span>
<div class="abs" style="left:0;top:202.5px;width:1957px;height:67.5px;background:#ffe9b4;"></div>
<div class="abs" style="left:0;top:268.0px;width:1957px;height:2px;background:#ebebf0;"></div>
<div class="abs" style="left:65.1px;top:205.3px;width:1.8px;height:62.5px;background:#d9dce3;"></div>
<div class="abs" style="left:335.1px;top:205.3px;width:1.8px;height:62.5px;background:#d9dce3;"></div>
<div class="abs" style="left:605.1px;top:205.3px;width:1.8px;height:62.5px;background:#d9dce3;"></div>
<div class="abs" style="left:875.1px;top:205.3px;width:1.8px;height:62.5px;background:#d9dce3;"></div>
<div class="abs" style="left:1145.1px;top:205.3px;width:1.8px;height:62.5px;background:#d9dce3;"></div>
<div class="abs" style="left:1415.1px;top:205.3px;width:1.8px;height:62.5px;background:#d9dce3;"></div>
<div class="abs" style="left:1685.1px;top:205.3px;width:1.8px;height:62.5px;background:#d9dce3;"></div>
<div class="abs" style="left:1955.1px;top:205.3px;width:1.8px;height:62.5px;background:#d9dce3;"></div>
<span class="t" style="left:26.5px;top:210.3px;font-size:24.75px;line-height:32px;color:#111;">4</span>
<span class="t" style="left:77.6px;top:210.8px;font-size:24.5px;line-height:31px;color:#148bd0;letter-spacing:-0.26px;">Block PasteBin Reddi...</span>
<span class="t" style="left:346.7px;top:210.3px;font-size:24.75px;line-height:32px;color:#111;letter-spacing:0.87px;">18290041</span>
<span class="t" style="left:617.8px;top:210.3px;font-size:24.75px;line-height:32px;color:#111;letter-spacing:0.89px;">2020-09-22</span>
<span class="t" style="left:757.5px;top:210.3px;font-size:24.75px;line-height:32px;color:#111;letter-spacing:0.34px;">16:33:45</span>
<span class="t" style="left:887.8px;top:210.3px;font-size:24.75px;line-height:32px;color:#111;letter-spacing:0.88px;">2020-04-15</span>
<span class="t" style="left:1027.5px;top:210.3px;font-size:24.75px;line-height:32px;color:#111;letter-spacing:0.34px;">18:00:36</span>
<span class="t" style="left:1158.8px;top:210.8px;font-size:24px;line-height:31px;color:#111;">-</span>
<span class="t" style="left:1427.8px;top:210.3px;font-size:24.75px;line-height:32px;color:#111;letter-spacing:0.89px;">2020-07-27</span>
<span class="t" style="left:1567.5px;top:210.3px;font-size:24.75px;line-height:32px;color:#111;letter-spacing:0.34px;">13:27:16</span>
<span class="t" style="left:1697.8px;top:210.3px;font-size:24.75px;line-height:32px;color:#111;letter-spacing:0.88px;">2020-04-15</span>
<span class="t" style="left:1837.5px;top:210.3px;font-size:24.75px;line-height:32px;color:#111;letter-spacing:0.36px;">17:29:12</span>
<div class="abs" style="left:0;top:270.0px;width:1957px;height:67.5px;background:#fff2d6;"></div>
<div class="abs" style="left:0;top:335.5px;width:1957px;height:2px;background:#ebebf0;"></div>
<div class="abs" style="left:65.1px;top:272.8px;width:1.8px;height:62.5px;background:#d9dce3;"></div>
<div class="abs" style="left:335.1px;top:272.8px;width:1.8px;height:62.5px;background:#d9dce3;"></div>
<div class="abs" style="left:605.1px;top:272.8px;width:1.8px;height:62.5px;background:#d9dce3;"></div>
<div class="abs" style="left:875.1px;top:272.8px;width:1.8px;height:62.5px;background:#d9dce3;"></div>
<div class="abs" style="left:1145.1px;top:272.8px;width:1.8px;height:62.5px;background:#d9dce3;"></div>
<div class="abs" style="left:1415.1px;top:272.8px;width:1.8px;height:62.5px;background:#d9dce3;"></div>
<div class="abs" style="left:1685.1px;top:272.8px;width:1.8px;height:62.5px;background:#d9dce3;"></div>
<div class="abs" style="left:1955.1px;top:272.8px;width:1.8px;height:62.5px;background:#d9dce3;"></div>
<span class="t" style="left:26.1px;top:277.8px;font-size:24.75px;line-height:32px;color:#111;">5</span>
<span class="t" style="left:77.6px;top:278.3px;font-size:24.5px;line-height:31px;color:#148bd0;letter-spacing:-0.18px;">Block Social Media</span>
<span class="t" style="left:347.7px;top:277.8px;font-size:24.75px;line-height:32px;color:#111;">0</span>
<span class="t" style="left:618.8px;top:278.3px;font-size:24px;line-height:31px;color:#111;">-</span>
<span class="t" style="left:888.8px;top:278.3px;font-size:24px;line-height:31px;color:#111;">-</span>
<span class="t" style="left:1158.8px;top:278.3px;font-size:24px;line-height:31px;color:#111;">-</span>
<span class="t" style="left:1427.8px;top:277.8px;font-size:24.75px;line-height:32px;color:#111;letter-spacing:0.89px;">2020-07-27</span>
<span class="t" style="left:1567.5px;top:277.8px;font-size:24.75px;line-height:32px;color:#111;letter-spacing:0.34px;">13:27:16</span>
<span class="t" style="left:1697.8px;top:277.8px;font-size:24.75px;line-height:32px;color:#111;letter-spacing:0.86px;">2020-06-30</span>
<span class="t" style="left:1837.5px;top:277.8px;font-size:24.75px;line-height:32px;color:#111;letter-spacing:0.34px;">16:37:15</span>
<div class="abs" style="left:0;top:337.5px;width:1957px;height:67.5px;background:#ffe9b4;"></div>
<div class="abs" style="left:0;top:403.0px;width:1957px;height:2px;background:#ebebf0;"></div>
<div class="abs" style="left:65.1px;top:340.3px;width:1.8px;height:62.5px;background:#d9dce3;"></div>
<div class="abs" style="left:335.1px;top:340.3px;width:1.8px;height:62.5px;background:#d9dce3;"></div>
<div class="abs" style="left:605.1px;top:340.3px;width:1.8px;height:62.5px;background:#d9dce3;"></div>
<div class="abs" style="left:875.1px;top:340.3px;width:1.8px;height:62.5px;background:#d9dce3;"></div>
<div class="abs" style="left:1145.1px;top:340.3px;width:1.8px;height:62.5px;background:#d9dce3;"></div>
<div class="abs" style="left:1415.1px;top:340.3px;width:1.8px;height:62.5px;background:#d9dce3;"></div>
<div class="abs" style="left:1685.1px;top:340.3px;width:1.8px;height:62.5px;background:#d9dce3;"></div>
<div class="abs" style="left:1955.1px;top:340.3px;width:1.8px;height:62.5px;background:#d9dce3;"></div>
<span class="t" style="left:25.8px;top:345.3px;font-size:24.75px;line-height:32px;color:#111;">6</span>
<span class="t" style="left:77.6px;top:345.8px;font-size:24.5px;line-height:31px;color:#148bd0;letter-spacing:0.24px;">Temp Allow for Cont...</span>
<span class="t" style="left:347.7px;top:345.3px;font-size:24.75px;line-height:32px;color:#111;">0</span>
<span class="t" style="left:618.8px;top:345.8px;font-size:24px;line-height:31px;color:#111;">-</span>
<span class="t" style="left:888.8px;top:345.8px;font-size:24px;line-height:31px;color:#111;">-</span>
<span class="t" style="left:1158.8px;top:345.8px;font-size:24px;line-height:31px;color:#111;">-</span>
<span class="t" style="left:1427.8px;top:345.3px;font-size:24.75px;line-height:32px;color:#111;letter-spacing:0.89px;">2020-07-27</span>
<span class="t" style="left:1567.5px;top:345.3px;font-size:24.75px;line-height:32px;color:#111;letter-spacing:0.34px;">13:27:16</span>
<span class="t" style="left:1697.8px;top:345.3px;font-size:24.75px;line-height:32px;color:#111;letter-spacing:0.89px;">2020-05-22</span>
<span class="t" style="left:1837.5px;top:345.3px;font-size:24.75px;line-height:32px;color:#111;letter-spacing:0.29px;">17:35:44</span>
<div class="abs" style="left:0;top:405.0px;width:1957px;height:67.5px;background:#fff2d6;"></div>
<div class="abs" style="left:0;top:470.5px;width:1957px;height:2px;background:#ebebf0;"></div>
<div class="abs" style="left:65.1px;top:407.8px;width:1.8px;height:62.5px;background:#d9dce3;"></div>
<div class="abs" style="left:335.1px;top:407.8px;width:1.8px;height:62.5px;background:#d9dce3;"></div>
<div class="abs" style="left:605.1px;top:407.8px;width:1.8px;height:62.5px;background:#d9dce3;"></div>
<div class="abs" style="left:875.1px;top:407.8px;width:1.8px;height:62.5px;background:#d9dce3;"></div>
<div class="abs" style="left:1145.1px;top:407.8px;width:1.8px;height:62.5px;background:#d9dce3;"></div>
<div class="abs" style="left:1415.1px;top:407.8px;width:1.8px;height:62.5px;background:#d9dce3;"></div>
<div class="abs" style="left:1685.1px;top:407.8px;width:1.8px;height:62.5px;background:#d9dce3;"></div>
<div class="abs" style="left:1955.1px;top:407.8px;width:1.8px;height:62.5px;background:#d9dce3;"></div>
<span class="t" style="left:25.8px;top:412.8px;font-size:24.75px;line-height:32px;color:#111;">7</span>
<span class="t" style="left:77.6px;top:413.3px;font-size:24.5px;line-height:31px;color:#148bd0;letter-spacing:0.28px;">Allow Fetch</span>
<span class="t" style="left:346.7px;top:412.8px;font-size:24.75px;line-height:32px;color:#111;letter-spacing:0.97px;">161307</span>
<span class="t" style="left:617.8px;top:412.8px;font-size:24.75px;line-height:32px;color:#111;letter-spacing:0.88px;">2020-08-13</span>
<span class="t" style="left:758.5px;top:412.8px;font-size:24.75px;line-height:32px;color:#111;letter-spacing:0.20px;">09:34:46</span>
<span class="t" style="left:887.8px;top:412.8px;font-size:24.75px;line-height:32px;color:#111;letter-spacing:0.88px;">2020-04-15</span>
<span class="t" style="left:1027.5px;top:412.8px;font-size:24.75px;line-height:32px;color:#111;letter-spacing:0.36px;">18:45:07</span>
<span class="t" style="left:1158.8px;top:413.3px;font-size:24px;line-height:31px;color:#111;">-</span>
<span class="t" style="left:1427.8px;top:412.8px;font-size:24.75px;line-height:32px;color:#111;letter-spacing:0.89px;">2020-07-27</span>
<span class="t" style="left:1567.5px;top:412.8px;font-size:24.75px;line-height:32px;color:#111;letter-spacing:0.34px;">13:27:16</span>
<span class="t" style="left:1697.8px;top:412.8px;font-size:24.75px;line-height:32px;color:#111;letter-spacing:0.88px;">2020-04-15</span>
<span class="t" style="left:1837.5px;top:412.8px;font-size:24.75px;line-height:32px;color:#111;letter-spacing:0.34px;">18:44:46</span>
<div class="abs" style="left:0;top:472.5px;width:1957px;height:67.5px;background:#ffe9b4;"></div>
<div class="abs" style="left:0;top:538.0px;width:1957px;height:2px;background:#ebebf0;"></div>
<div class="abs" style="left:65.1px;top:475.3px;width:1.8px;height:62.5px;background:#d9dce3;"></div>
<div class="abs" style="left:335.1px;top:475.3px;width:1.8px;height:62.5px;background:#d9dce3;"></div>
<div class="abs" style="left:605.1px;top:475.3px;width:1.8px;height:62.5px;background:#d9dce3;"></div>
<div class="abs" style="left:875.1px;top:475.3px;width:1.8px;height:62.5px;background:#d9dce3;"></div>
<div class="abs" style="left:1145.1px;top:475.3px;width:1.8px;height:62.5px;background:#d9dce3;"></div>
<div class="abs" style="left:1415.1px;top:475.3px;width:1.8px;height:62.5px;background:#d9dce3;"></div>
<div class="abs" style="left:1685.1px;top:475.3px;width:1.8px;height:62.5px;background:#d9dce3;"></div>
<div class="abs" style="left:1955.1px;top:475.3px;width:1.8px;height:62.5px;background:#d9dce3;"></div>
<span class="t" style="left:26.0px;top:480.3px;font-size:24.75px;line-height:32px;color:#111;">8</span>
<span class="t" style="left:77.6px;top:480.8px;font-size:24.5px;line-height:31px;color:#148bd0;letter-spacing:-0.15px;">Allow_SCADA_Traffic</span>
<span class="t" style="left:347.7px;top:480.3px;font-size:24.75px;line-height:32px;color:#111;letter-spacing:0.78px;">357362</span>
<span class="t" style="left:617.8px;top:480.3px;font-size:24.75px;line-height:32px;color:#111;letter-spacing:0.89px;">2020-09-22</span>
<span class="t" style="left:757.5px;top:480.3px;font-size:24.75px;line-height:32px;color:#111;letter-spacing:0.36px;">16:35:09</span>
<span class="t" style="left:887.8px;top:480.3px;font-size:24.75px;line-height:32px;color:#111;letter-spacing:0.89px;">2020-04-09</span>
<span class="t" style="left:1027.5px;top:480.3px;font-size:24.75px;line-height:32px;color:#111;letter-spacing:0.56px;">11:34:44</span>
<span class="t" style="left:1158.8px;top:480.8px;font-size:24px;line-height:31px;color:#111;">-</span>
<span class="t" style="left:1427.8px;top:480.3px;font-size:24.75px;line-height:32px;color:#111;letter-spacing:0.89px;">2020-07-27</span>
<span class="t" style="left:1567.5px;top:480.3px;font-size:24.75px;line-height:32px;color:#111;letter-spacing:0.34px;">13:27:16</span>
<span class="t" style="left:1697.8px;top:480.3px;font-size:24.75px;line-height:32px;color:#111;letter-spacing:0.89px;">2020-04-09</span>
<span class="t" style="left:1837.5px;top:480.3px;font-size:24.75px;line-height:32px;color:#111;letter-spacing:0.61px;">11:34:48</span>
<div class="abs" style="left:0;top:540.0px;width:1957px;height:67.5px;background:#fff2d6;"></div>
<div class="abs" style="left:0;top:605.5px;width:1957px;height:2px;background:#ebebf0;"></div>
<div class="abs" style="left:65.1px;top:542.8px;width:1.8px;height:62.5px;background:#d9dce3;"></div>
<div class="abs" style="left:335.1px;top:542.8px;width:1.8px;height:62.5px;background:#d9dce3;"></div>
<div class="abs" style="left:605.1px;top:542.8px;width:1.8px;height:62.5px;background:#d9dce3;"></div>
<div class="abs" style="left:875.1px;top:542.8px;width:1.8px;height:62.5px;background:#d9dce3;"></div>
<div class="abs" style="left:1145.1px;top:542.8px;width:1.8px;height:62.5px;background:#d9dce3;"></div>
<div class="abs" style="left:1415.1px;top:542.8px;width:1.8px;height:62.5px;background:#d9dce3;"></div>
<div class="abs" style="left:1685.1px;top:542.8px;width:1.8px;height:62.5px;background:#d9dce3;"></div>
<div class="abs" style="left:1955.1px;top:542.8px;width:1.8px;height:62.5px;background:#d9dce3;"></div>
<span class="t" style="left:25.9px;top:547.8px;font-size:24.75px;line-height:32px;color:#111;">9</span>
<span class="t" style="left:77.6px;top:548.3px;font-size:24.5px;line-height:31px;color:#148bd0;letter-spacing:0.72px;">Zoom</span>
<span class="t" style="left:347.7px;top:547.8px;font-size:24.75px;line-height:32px;color:#111;">0</span>
<span class="t" style="left:618.8px;top:548.3px;font-size:24px;line-height:31px;color:#111;">-</span>
<span class="t" style="left:888.8px;top:548.3px;font-size:24px;line-height:31px;color:#111;">-</span>
<span class="t" style="left:1158.8px;top:548.3px;font-size:24px;line-height:31px;color:#111;">-</span>
<span class="t" style="left:1427.8px;top:547.8px;font-size:24.75px;line-height:32px;color:#111;letter-spacing:0.89px;">2020-07-27</span>
<span class="t" style="left:1567.5px;top:547.8px;font-size:24.75px;line-height:32px;color:#111;letter-spacing:0.34px;">13:27:16</span>
<span class="t" style="left:1697.8px;top:547.8px;font-size:24.75px;line-height:32px;color:#111;letter-spacing:0.88px;">2020-04-16</span>
<span class="t" style="left:1837.5px;top:547.8px;font-size:24.75px;line-height:32px;color:#111;letter-spacing:0.63px;">11:43:49</span>
<div class="abs" style="left:0;top:607.5px;width:1957px;height:67.5px;background:#ffe9b4;"></div>
<div class="abs" style="left:0;top:673.0px;width:1957px;height:2px;background:#ebebf0;"></div>
<div class="abs" style="left:65.1px;top:610.3px;width:1.8px;height:62.5px;background:#d9dce3;"></div>
<div class="abs" style="left:335.1px;top:610.3px;width:1.8px;height:62.5px;background:#d9dce3;"></div>
<div class="abs" style="left:605.1px;top:610.3px;width:1.8px;height:62.5px;background:#d9dce3;"></div>
<div class="abs" style="left:875.1px;top:610.3px;width:1.8px;height:62.5px;background:#d9dce3;"></div>
<div class="abs" style="left:1145.1px;top:610.3px;width:1.8px;height:62.5px;background:#d9dce3;"></div>
<div class="abs" style="left:1415.1px;top:610.3px;width:1.8px;height:62.5px;background:#d9dce3;"></div>
<div class="abs" style="left:1685.1px;top:610.3px;width:1.8px;height:62.5px;background:#d9dce3;"></div>
<div class="abs" style="left:1955.1px;top:610.3px;width:1.8px;height:62.5px;background:#d9dce3;"></div>
<span class="t" style="left:18.0px;top:615.3px;font-size:24.75px;line-height:32px;color:#111;letter-spacing:2.35px;">10</span>
<span class="t" style="left:77.6px;top:615.8px;font-size:24.5px;line-height:31px;color:#148bd0;letter-spacing:0.28px;">Allow Gsuite</span>
<span class="t" style="left:348.1px;top:615.3px;font-size:24.75px;line-height:32px;color:#111;letter-spacing:0.66px;">4976276</span>
<span class="t" style="left:617.8px;top:615.3px;font-size:24.75px;line-height:32px;color:#111;letter-spacing:0.89px;">2020-09-22</span>
<span class="t" style="left:757.5px;top:615.3px;font-size:24.75px;line-height:32px;color:#111;letter-spacing:0.33px;">16:18:20</span>
<span class="t" style="left:887.8px;top:615.3px;font-size:24.75px;line-height:32px;color:#111;letter-spacing:0.88px;">2020-04-16</span>
<span class="t" style="left:1027.5px;top:615.3px;font-size:24.75px;line-height:32px;color:#111;letter-spacing:0.63px;">11:48:02</span>
<span class="t" style="left:1158.8px;top:615.8px;font-size:24px;line-height:31px;color:#111;">-</span>
<span class="t" style="left:1427.8px;top:615.3px;font-size:24.75px;line-height:32px;color:#111;letter-spacing:0.89px;">2020-07-27</span>
<span class="t" style="left:1567.5px;top:615.3px;font-size:24.75px;line-height:32px;color:#111;letter-spacing:0.34px;">13:27:16</span>
<span class="t" style="left:1697.8px;top:615.3px;font-size:24.75px;line-height:32px;color:#111;letter-spacing:0.88px;">2020-04-16</span>
<span class="t" style="left:1837.5px;top:615.3px;font-size:24.75px;line-height:32px;color:#111;letter-spacing:0.63px;">11:43:49</span>
<div class="abs" style="left:0;top:675.0px;width:1957px;height:67.5px;background:#fff2d6;"></div>
<div class="abs" style="left:0;top:740.5px;width:1957px;height:2px;background:#ebebf0;"></div>
<div class="abs" style="left:65.1px;top:677.8px;width:1.8px;height:62.5px;background:#d9dce3;"></div>
<div class="abs" style="left:335.1px;top:677.8px;width:1.8px;height:62.5px;background:#d9dce3;"></div>
<div class="abs" style="left:605.1px;top:677.8px;width:1.8px;height:62.5px;background:#d9dce3;"></div>
<div class="abs" style="left:875.1px;top:677.8px;width:1.8px;height:62.5px;background:#d9dce3;"></div>
<div class="abs" style="left:1145.1px;top:677.8px;width:1.8px;height:62.5px;background:#d9dce3;"></div>
<div class="abs" style="left:1415.1px;top:677.8px;width:1.8px;height:62.5px;background:#d9dce3;"></div>
<div class="abs" style="left:1685.1px;top:677.8px;width:1.8px;height:62.5px;background:#d9dce3;"></div>
<div class="abs" style="left:1955.1px;top:677.8px;width:1.8px;height:62.5px;background:#d9dce3;"></div>
<span class="t" style="left:18.0px;top:682.8px;font-size:24.75px;line-height:32px;color:#111;letter-spacing:4.47px;">11</span>
<span class="t" style="left:77.6px;top:683.3px;font-size:24.5px;line-height:31px;color:#148bd0;letter-spacing:0.34px;">Allow Office365 Core</span>
<span class="t" style="left:347.5px;top:682.8px;font-size:24.75px;line-height:32px;color:#111;letter-spacing:1.16px;">235</span>
<span class="t" style="left:617.8px;top:682.8px;font-size:24.75px;line-height:32px;color:#111;letter-spacing:0.89px;">2020-09-22</span>
<span class="t" style="left:757.5px;top:682.8px;font-size:24.75px;line-height:32px;color:#111;letter-spacing:0.36px;">13:19:47</span>
<span class="t" style="left:887.8px;top:682.8px;font-size:24.75px;line-height:32px;color:#111;letter-spacing:0.89px;">2020-05-22</span>
<span class="t" style="left:1027.5px;top:682.8px;font-size:24.75px;line-height:32px;color:#111;letter-spacing:0.33px;">17:49:50</span>
<span class="t" style="left:1158.8px;top:683.3px;font-size:24px;line-height:31px;color:#111;">-</span>
<span class="t" style="left:1427.8px;top:682.8px;font-size:24.75px;line-height:32px;color:#111;letter-spacing:0.89px;">2020-07-27</span>
<span class="t" style="left:1567.5px;top:682.8px;font-size:24.75px;line-height:32px;color:#111;letter-spacing:0.34px;">13:27:16</span>
<span class="t" style="left:1697.8px;top:682.8px;font-size:24.75px;line-height:32px;color:#111;letter-spacing:0.89px;">2020-05-22</span>
<span class="t" style="left:1837.5px;top:682.8px;font-size:24.75px;line-height:32px;color:#111;letter-spacing:0.34px;">17:28:26</span>
<div class="abs" style="left:0;top:742.5px;width:1957px;height:67.5px;background:#ffe9b4;"></div>
<div class="abs" style="left:0;top:808.0px;width:1957px;height:2px;background:#ebebf0;"></div>
<div class="abs" style="left:65.1px;top:745.3px;width:1.8px;height:62.5px;background:#d9dce3;"></div>
<div class="abs" style="left:335.1px;top:745.3px;width:1.8px;height:62.5px;background:#d9dce3;"></div>
<div class="abs" style="left:605.1px;top:745.3px;width:1.8px;height:62.5px;background:#d9dce3;"></div>
<div class="abs" style="left:875.1px;top:745.3px;width:1.8px;height:62.5px;background:#d9dce3;"></div>
<div class="abs" style="left:1145.1px;top:745.3px;width:1.8px;height:62.5px;background:#d9dce3;"></div>
<div class="abs" style="left:1415.1px;top:745.3px;width:1.8px;height:62.5px;background:#d9dce3;"></div>
<div class="abs" style="left:1685.1px;top:745.3px;width:1.8px;height:62.5px;background:#d9dce3;"></div>
<div class="abs" style="left:1955.1px;top:745.3px;width:1.8px;height:62.5px;background:#d9dce3;"></div>
<span class="t" style="left:18.0px;top:750.3px;font-size:24.75px;line-height:32px;color:#111;letter-spacing:2.60px;">12</span>
<span class="t" style="left:77.6px;top:750.8px;font-size:24.5px;line-height:31px;color:#148bd0;letter-spacing:0.39px;">Allow Office365 Infra</span>
<span class="t" style="left:347.7px;top:750.3px;font-size:24.75px;line-height:32px;color:#111;">0</span>
<span class="t" style="left:618.8px;top:750.8px;font-size:24px;line-height:31px;color:#111;">-</span>
<span class="t" style="left:888.8px;top:750.8px;font-size:24px;line-height:31px;color:#111;">-</span>
<span class="t" style="left:1158.8px;top:750.8px;font-size:24px;line-height:31px;color:#111;">-</span>
<span class="t" style="left:1427.8px;top:750.3px;font-size:24.75px;line-height:32px;color:#111;letter-spacing:0.89px;">2020-07-27</span>
<span class="t" style="left:1567.5px;top:750.3px;font-size:24.75px;line-height:32px;color:#111;letter-spacing:0.34px;">13:27:16</span>
<span class="t" style="left:1697.8px;top:750.3px;font-size:24.75px;line-height:32px;color:#111;letter-spacing:0.89px;">2020-05-22</span>
<span class="t" style="left:1838.3px;top:750.3px;font-size:24.75px;line-height:32px;color:#111;letter-spacing:0.18px;">22:46:44</span>
<div class="abs" style="left:0;top:810.0px;width:1957px;height:67.5px;background:#fff2d6;"></div>
<div class="abs" style="left:0;top:875.5px;width:1957px;height:2px;background:#ebebf0;"></div>
<div class="abs" style="left:65.1px;top:812.8px;width:1.8px;height:62.5px;background:#d9dce3;"></div>
<div class="abs" style="left:335.1px;top:812.8px;width:1.8px;height:62.5px;background:#d9dce3;"></div>
<div class="abs" style="left:605.1px;top:812.8px;width:1.8px;height:62.5px;background:#d9dce3;"></div>
<div class="abs" style="left:875.1px;top:812.8px;width:1.8px;height:62.5px;background:#d9dce3;"></div>
<div class="abs" style="left:1145.1px;top:812.8px;width:1.8px;height:62.5px;background:#d9dce3;"></div>
<div class="abs" style="left:1415.1px;top:812.8px;width:1.8px;height:62.5px;background:#d9dce3;"></div>
<div class="abs" style="left:1685.1px;top:812.8px;width:1.8px;height:62.5px;background:#d9dce3;"></div>
<div class="abs" style="left:1955.1px;top:812.8px;width:1.8px;height:62.5px;background:#d9dce3;"></div>
<span class="t" style="left:18.0px;top:817.8px;font-size:24.75px;line-height:32px;color:#111;letter-spacing:2.47px;">13</span>
<span class="t" style="left:77.6px;top:818.3px;font-size:24.5px;line-height:31px;color:#148bd0;letter-spacing:0.19px;">Allow Office365 ssl ...</span>
<span class="t" style="left:347.5px;top:817.8px;font-size:24.75px;line-height:32px;color:#111;letter-spacing:0.88px;">29597</span>
<span class="t" style="left:617.8px;top:817.8px;font-size:24.75px;line-height:32px;color:#111;letter-spacing:0.89px;">2020-09-22</span>
<span class="t" style="left:757.5px;top:817.8px;font-size:24.75px;line-height:32px;color:#111;letter-spacing:0.36px;">16:33:01</span>
<span class="t" style="left:887.8px;top:817.8px;font-size:24.75px;line-height:32px;color:#111;letter-spacing:0.89px;">2020-05-22</span>
<span class="t" style="left:1028.3px;top:817.8px;font-size:24.75px;line-height:32px;color:#111;letter-spacing:0.25px;">22:55:02</span>
<span class="t" style="left:1158.8px;top:818.3px;font-size:24px;line-height:31px;color:#111;">-</span>
<span class="t" style="left:1427.8px;top:817.8px;font-size:24.75px;line-height:32px;color:#111;letter-spacing:0.89px;">2020-07-27</span>
<span class="t" style="left:1567.5px;top:817.8px;font-size:24.75px;line-height:32px;color:#111;letter-spacing:0.34px;">13:27:16</span>
<span class="t" style="left:1697.8px;top:817.8px;font-size:24.75px;line-height:32px;color:#111;letter-spacing:0.89px;">2020-05-22</span>
<span class="t" style="left:1838.3px;top:817.8px;font-size:24.75px;line-height:32px;color:#111;letter-spacing:0.18px;">22:46:44</span>
<div class="abs" style="left:0;top:877.5px;width:1957px;height:67.5px;background:#ffe9b4;"></div>
<div class="abs" style="left:0;top:943.0px;width:1957px;height:2px;background:#ebebf0;"></div>
<div class="abs" style="left:65.1px;top:880.3px;width:1.8px;height:62.5px;background:#d9dce3;"></div>
<div class="abs" style="left:335.1px;top:880.3px;width:1.8px;height:62.5px;background:#d9dce3;"></div>
<div class="abs" style="left:605.1px;top:880.3px;width:1.8px;height:62.5px;background:#d9dce3;"></div>
<div class="abs" style="left:875.1px;top:880.3px;width:1.8px;height:62.5px;background:#d9dce3;"></div>
<div class="abs" style="left:1145.1px;top:880.3px;width:1.8px;height:62.5px;background:#d9dce3;"></div>
<div class="abs" style="left:1415.1px;top:880.3px;width:1.8px;height:62.5px;background:#d9dce3;"></div>
<div class="abs" style="left:1685.1px;top:880.3px;width:1.8px;height:62.5px;background:#d9dce3;"></div>
<div class="abs" style="left:1955.1px;top:880.3px;width:1.8px;height:62.5px;background:#d9dce3;"></div>
<span class="t" style="left:18.0px;top:885.3px;font-size:24.75px;line-height:32px;color:#111;letter-spacing:2.10px;">14</span>
<span class="t" style="left:77.6px;top:885.8px;font-size:24.5px;line-height:31px;color:#148bd0;letter-spacing:0.10px;">Allow March Madness</span>
<span class="t" style="left:346.7px;top:885.3px;font-size:24.75px;line-height:32px;color:#111;letter-spacing:1.01px;">13980</span>
<span class="t" style="left:617.8px;top:885.3px;font-size:24.75px;line-height:32px;color:#111;letter-spacing:1.10px;">2020-08-11</span>
<span class="t" style="left:758.5px;top:885.3px;font-size:24.75px;line-height:32px;color:#111;letter-spacing:0.22px;">08:54:17</span>
<span class="t" style="left:887.8px;top:885.3px;font-size:24.75px;line-height:32px;color:#111;letter-spacing:0.89px;">2020-04-09</span>
<span class="t" style="left:1027.5px;top:885.3px;font-size:24.75px;line-height:32px;color:#111;letter-spacing:0.34px;">15:22:46</span>
<span class="t" style="left:1158.8px;top:885.8px;font-size:24px;line-height:31px;color:#111;">-</span>
<span class="t" style="left:1427.8px;top:885.3px;font-size:24.75px;line-height:32px;color:#111;letter-spacing:0.89px;">2020-07-27</span>
<span class="t" style="left:1567.5px;top:885.3px;font-size:24.75px;line-height:32px;color:#111;letter-spacing:0.34px;">13:27:16</span>
<span class="t" style="left:1697.8px;top:885.3px;font-size:24.75px;line-height:32px;color:#111;letter-spacing:0.89px;">2020-04-09</span>
<span class="t" style="left:1837.5px;top:885.3px;font-size:24.75px;line-height:32px;color:#111;letter-spacing:0.36px;">14:47:09</span>
<div class="abs" style="left:0;top:945.0px;width:1957px;height:67.5px;background:#fff2d6;"></div>
<div class="abs" style="left:0;top:1010.5px;width:1957px;height:2px;background:#ebebf0;"></div>
<div class="abs" style="left:65.1px;top:947.8px;width:1.8px;height:62.5px;background:#d9dce3;"></div>
<div class="abs" style="left:335.1px;top:947.8px;width:1.8px;height:62.5px;background:#d9dce3;"></div>
<div class="abs" style="left:605.1px;top:947.8px;width:1.8px;height:62.5px;background:#d9dce3;"></div>
<div class="abs" style="left:875.1px;top:947.8px;width:1.8px;height:62.5px;background:#d9dce3;"></div>
<div class="abs" style="left:1145.1px;top:947.8px;width:1.8px;height:62.5px;background:#d9dce3;"></div>
<div class="abs" style="left:1415.1px;top:947.8px;width:1.8px;height:62.5px;background:#d9dce3;"></div>
<div class="abs" style="left:1685.1px;top:947.8px;width:1.8px;height:62.5px;background:#d9dce3;"></div>
<div class="abs" style="left:1955.1px;top:947.8px;width:1.8px;height:62.5px;background:#d9dce3;"></div>
<span class="t" style="left:18.0px;top:952.8px;font-size:24.75px;line-height:32px;color:#111;letter-spacing:2.47px;">15</span>
<span class="t" style="left:77.6px;top:953.3px;font-size:24.5px;line-height:31px;color:#148bd0;letter-spacing:0.28px;">Allow ssl http</span>
<span class="t" style="left:347.7px;top:952.8px;font-size:24.75px;line-height:32px;color:#111;letter-spacing:0.69px;">33526300</span>
<span class="t" style="left:617.8px;top:952.8px;font-size:24.75px;line-height:32px;color:#111;letter-spacing:0.89px;">2020-09-22</span>
<span class="t" style="left:757.5px;top:952.8px;font-size:24.75px;line-height:32px;color:#111;letter-spacing:0.34px;">16:33:45</span>
<span class="t" style="left:887.8px;top:952.8px;font-size:24.75px;line-height:32px;color:#111;letter-spacing:0.89px;">2020-04-09</span>
<span class="t" style="left:1027.5px;top:952.8px;font-size:24.75px;line-height:32px;color:#111;letter-spacing:0.34px;">15:22:46</span>
<span class="t" style="left:1158.8px;top:953.3px;font-size:24px;line-height:31px;color:#111;">-</span>
<span class="t" style="left:1427.8px;top:952.8px;font-size:24.75px;line-height:32px;color:#111;letter-spacing:0.89px;">2020-07-27</span>
<span class="t" style="left:1567.5px;top:952.8px;font-size:24.75px;line-height:32px;color:#111;letter-spacing:0.34px;">13:27:16</span>
<span class="t" style="left:1697.8px;top:952.8px;font-size:24.75px;line-height:32px;color:#111;letter-spacing:0.89px;">2020-04-09</span>
<span class="t" style="left:1837.5px;top:952.8px;font-size:24.75px;line-height:32px;color:#111;letter-spacing:0.36px;">14:47:09</span>
<div class="abs" style="left:0;top:1012.5px;width:1957px;height:67.5px;background:#ffe9b4;"></div>
<div class="abs" style="left:0;top:1078.0px;width:1957px;height:2px;background:#ebebf0;"></div>
<div class="abs" style="left:65.1px;top:1015.3px;width:1.8px;height:62.5px;background:#d9dce3;"></div>
<div class="abs" style="left:335.1px;top:1015.3px;width:1.8px;height:62.5px;background:#d9dce3;"></div>
<div class="abs" style="left:605.1px;top:1015.3px;width:1.8px;height:62.5px;background:#d9dce3;"></div>
<div class="abs" style="left:875.1px;top:1015.3px;width:1.8px;height:62.5px;background:#d9dce3;"></div>
<div class="abs" style="left:1145.1px;top:1015.3px;width:1.8px;height:62.5px;background:#d9dce3;"></div>
<div class="abs" style="left:1415.1px;top:1015.3px;width:1.8px;height:62.5px;background:#d9dce3;"></div>
<div class="abs" style="left:1685.1px;top:1015.3px;width:1.8px;height:62.5px;background:#d9dce3;"></div>
<div class="abs" style="left:1955.1px;top:1015.3px;width:1.8px;height:62.5px;background:#d9dce3;"></div>
<span class="t" style="left:18.0px;top:1020.3px;font-size:24.75px;line-height:32px;color:#111;letter-spacing:2.47px;">16</span>
<span class="t" style="left:77.6px;top:1020.8px;font-size:24.5px;line-height:31px;color:#148bd0;letter-spacing:0.12px;">Known Device Ping</span>
<span class="t" style="left:346.7px;top:1020.3px;font-size:24.75px;line-height:32px;color:#111;letter-spacing:0.97px;">151859</span>
<span class="t" style="left:617.8px;top:1020.3px;font-size:24.75px;line-height:32px;color:#111;letter-spacing:0.88px;">2020-08-13</span>
<span class="t" style="left:758.5px;top:1020.3px;font-size:24.75px;line-height:32px;color:#111;letter-spacing:0.22px;">09:36:37</span>
<span class="t" style="left:887.8px;top:1020.3px;font-size:24.75px;line-height:32px;color:#111;letter-spacing:0.88px;">2020-04-13</span>
<span class="t" style="left:1027.5px;top:1020.3px;font-size:24.75px;line-height:32px;color:#111;letter-spacing:0.34px;">16:57:45</span>
<span class="t" style="left:1158.8px;top:1020.8px;font-size:24px;line-height:31px;color:#111;">-</span>
<span class="t" style="left:1427.8px;top:1020.3px;font-size:24.75px;line-height:32px;color:#111;letter-spacing:0.89px;">2020-07-27</span>
<span class="t" style="left:1567.5px;top:1020.3px;font-size:24.75px;line-height:32px;color:#111;letter-spacing:0.34px;">13:27:16</span>
<span class="t" style="left:1697.8px;top:1020.3px;font-size:24.75px;line-height:32px;color:#111;letter-spacing:0.88px;">2020-04-13</span>
<span class="t" style="left:1837.5px;top:1020.3px;font-size:24.75px;line-height:32px;color:#111;letter-spacing:0.33px;">16:39:40</span>
<div class="abs" style="left:0;top:1080.0px;width:1957px;height:67.5px;background:#fff2d6;"></div>
<div class="abs" style="left:0;top:1145.5px;width:1957px;height:2px;background:#ebebf0;"></div>
<div class="abs" style="left:65.1px;top:1082.8px;width:1.8px;height:62.5px;background:#d9dce3;"></div>
<div class="abs" style="left:335.1px;top:1082.8px;width:1.8px;height:62.5px;background:#d9dce3;"></div>
<div class="abs" style="left:605.1px;top:1082.8px;width:1.8px;height:62.5px;background:#d9dce3;"></div>
<div class="abs" style="left:875.1px;top:1082.8px;width:1.8px;height:62.5px;background:#d9dce3;"></div>
<div class="abs" style="left:1145.1px;top:1082.8px;width:1.8px;height:62.5px;background:#d9dce3;"></div>
<div class="abs" style="left:1415.1px;top:1082.8px;width:1.8px;height:62.5px;background:#d9dce3;"></div>
<div class="abs" style="left:1685.1px;top:1082.8px;width:1.8px;height:62.5px;background:#d9dce3;"></div>
<div class="abs" style="left:1955.1px;top:1082.8px;width:1.8px;height:62.5px;background:#d9dce3;"></div>
<span class="t" style="left:18.0px;top:1087.8px;font-size:24.75px;line-height:32px;color:#111;letter-spacing:2.60px;">17</span>
<span class="t" style="left:77.6px;top:1088.3px;font-size:24.5px;line-height:31px;color:#148bd0;letter-spacing:0.19px;">Allow_Office_Interne...</span>
<span class="t" style="left:347.7px;top:1087.8px;font-size:24.75px;line-height:32px;color:#111;letter-spacing:1.35px;">30</span>
<span class="t" style="left:617.8px;top:1087.8px;font-size:24.75px;line-height:32px;color:#111;letter-spacing:0.88px;">2020-08-13</span>
<span class="t" style="left:758.5px;top:1087.8px;font-size:24.75px;line-height:32px;color:#111;letter-spacing:0.20px;">09:36:56</span>
<span class="t" style="left:887.8px;top:1087.8px;font-size:24.75px;line-height:32px;color:#111;letter-spacing:0.89px;">2020-04-22</span>
<span class="t" style="left:1027.5px;top:1087.8px;font-size:24.75px;line-height:32px;color:#111;letter-spacing:0.56px;">11:26:54</span>
<span class="t" style="left:1158.8px;top:1088.3px;font-size:24px;line-height:31px;color:#111;">-</span>
<span class="t" style="left:1427.8px;top:1087.8px;font-size:24.75px;line-height:32px;color:#111;letter-spacing:0.89px;">2020-07-27</span>
<span class="t" style="left:1567.5px;top:1087.8px;font-size:24.75px;line-height:32px;color:#111;letter-spacing:0.34px;">13:27:16</span>
<span class="t" style="left:1697.8px;top:1087.8px;font-size:24.75px;line-height:32px;color:#111;letter-spacing:0.89px;">2020-04-22</span>
<span class="t" style="left:1837.5px;top:1087.8px;font-size:24.75px;line-height:32px;color:#111;letter-spacing:0.59px;">11:26:20</span>
</div>
<div class="abs" style="left:3800px;top:485px;width:40px;height:1131px;background:#f1f1f1;"></div>
<div class="abs" style="left:3801px;top:528px;width:38px;height:354px;background:#c1c1c1;"></div>
<svg width="40" height="1131" style="left:3800px;top:485px" viewBox="3800 485 40 1131"><path d="M3809.5,513 L3819.8,503 L3830,513 Z" fill="#a3a3a3"/><path d="M3810,1588.7 H3830 L3820,1599.3 Z" fill="#505050"/></svg>
<svg width="12" height="84" style="left:439px;top:874px" viewBox="439 874 12 84"><path d="M439,884.5 L447.8,876 V954.6 L439,946 Z" fill="rgba(205,205,205,0.38)"/><path d="M445.9,910 V921 L439.2,915.5 Z" fill="rgba(120,115,105,0.75)"/></svg>
<div class="abs" style="left:439px;top:1616px;width:3401px;height:2px;background:#c4c8cb;"></div>
<div class="abs" style="left:439px;top:1618px;width:3401px;height:61px;background:#fbfcfc;"></div>
<svg width="1300" height="61" style="left:439px;top:1618px" viewBox="439 1618 1300 61" fill="none"><g stroke-width="2.3"><circle cx="469.5" cy="1644" r="15.6" stroke="#f3c6c8"/><path d="M460,1644 H479" stroke="#f3c6c8"/><circle cx="612" cy="1644" r="15.8" stroke="#bfe6c2"/><path d="M603.5,1644.5 L609.5,1651 L620.5,1637.5" stroke="#a6dcaa" stroke-width="3"/><circle cx="760" cy="1644" r="15.8" stroke="#f3c6c8"/><path d="M749,1633 L771,1655" stroke="#f3c6c8"/><circle cx="915.5" cy="1643.7" r="15.4" stroke="#2a8fc6" stroke-width="1.8"/><circle cx="915.5" cy="1643.7" r="13" stroke="#5aa9d3" stroke-width="1.6"/><rect x="906.5" y="1635" width="18" height="18" rx="2.5" stroke="#2a8fc6" stroke-width="2.2"/><path d="M911,1648.5 L915.5,1640.5 L920,1648.5 M912.5,1646.5 H918.5" stroke="#2a8fc6" stroke-width="1.6"/></g><path d="M1365,1641.8 L1371.5,1648.3 L1378,1641.8" stroke="#555b62" stroke-width="2.8"/><rect x="1401.5" y="1630.5" width="26.5" height="26.5" rx="3" fill="#b9d6e6"/><path d="M1409,1650 L1410.5,1644.5 L1418.5,1636.5 L1422,1640 L1414,1648 Z" stroke="#fff" stroke-width="1.8"/><rect x="1510" y="1630.5" width="26.5" height="26.5" rx="3" fill="#b9d6e6"/><path d="M1517.5,1650 L1519,1644.5 L1527,1636.5 L1530.5,1640 L1522.5,1648 Z" stroke="#fff" stroke-width="1.8"/></svg>
<span class="t" style="left:493.8px;top:1627.5px;font-size:25.5px;line-height:33px;color:#cfd3d7;letter-spacing:1.03px;">Delete</span>
<span class="t" style="left:640.5px;top:1627.5px;font-size:25.5px;line-height:33px;color:#cfd3d7;letter-spacing:-0.02px;">Enable</span>
<span class="t" style="left:788.2px;top:1627.5px;font-size:25.5px;line-height:33px;color:#cfd3d7;letter-spacing:0.30px;">Disable</span>
<span class="t" style="left:939.3px;top:1627.5px;font-size:25.5px;line-height:33px;color:#4a535d;letter-spacing:0.27px;">PDF/CSV</span>
<span class="t" style="left:1081.8px;top:1627.3px;font-size:25.5px;line-height:33px;color:#4a535d;letter-spacing:0.47px;">Reset Rule Hit Counter</span>
<span class="t" style="left:1442.7px;top:1627.5px;font-size:25.5px;line-height:33px;color:#cfd3d7;letter-spacing:-0.10px;">Tag</span>
<span class="t" style="left:1550.1px;top:1627.5px;font-size:25.5px;line-height:33px;color:#cfd3d7;letter-spacing:-0.21px;">UnTag</span>
<div id="bot"></div>
</body></html>
